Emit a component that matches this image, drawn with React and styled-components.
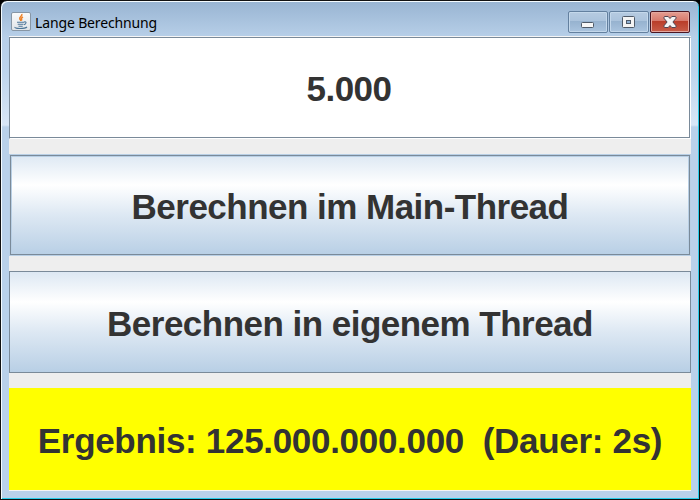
import React from "react";
import styled, { createGlobalStyle } from "styled-components";

const Global = createGlobalStyle`
  * { box-sizing: border-box; }
  body { margin: 0; background: #000; overflow: hidden; }
`;
const Window = styled.main`
  width: 700px; height: 500px; display: flex; flex-direction: column;
  padding: 0 8px 7px;
  border: 1px solid #111;
  border-radius: 7px 7px 0 0;
  background: linear-gradient(180deg, #98b4d2 0, #b7cfe8 36px, #bdd4ec 70px, #d8e6f6 124px, #b9d1ea 126px);
  box-shadow: inset 1px 1px #f4fbff, inset -1px -1px #28cdea;
`;
const TitleBar = styled.header`
  height: 35px; flex: none; display: flex; padding: 10px 0 0 2px;
`;
const Title = styled.h1`
  margin: 2px auto 0 4px; font: 14px/20px "Noto Sans", sans-serif; color: #000;
  letter-spacing: -0.14px;
`;
const Controls = styled.div`display: flex; gap: 1px; margin-right: 1px;`;
const Control = styled.button`
  width: 40px; height: 22px; padding: 0; display: grid; place-items: center;
  border: 1px solid ${p => p.$close ? "#4b1521" : "#63809f"}; border-radius: 2px;
  box-shadow: inset 0 0 0 1px ${p => p.$close ? "#e3a79f" : "#c4d8eb"};
  background: ${p => p.$close
    ? "linear-gradient(#e49d91 0, #d7786b 45%, #b93c29 46%, #c95d49 100%)"
    : "linear-gradient(#b6cbe1 0, #abc3dc 45%, #96b2cf 46%, #aac4df 100%)"};
  svg { display: block; }
`;
const Content = styled.section`
  height: 455px; background: #eee; display: flex; flex-direction: column; gap: 15px;
  border-top: 1px solid #f5f5f5;
  border-bottom: 1px solid #f5f5f5;
`;
const caption = `
  font: bold 35px/1 "Liberation Sans", Arial, sans-serif; color: #333; text-align: center;
  letter-spacing: -0.52px;
  height: 102px; flex: none; margin: 0;
`;
const Field = styled.input`
  ${caption}
  width: 100%; padding: 2px 2px 0 0; outline: 0;
  background: #fff; border: 1px solid #7a8a99; border-radius: 0;
  border-right-color: #fff; border-bottom-color: #fff;
  box-shadow: inset -1px -1px #7a8a99;
`;
const Action = styled.button`
  ${caption}
  padding: 3px 0 0; border: 1px solid ${p => p.$focused ? "#b8cfe5" : "#7a8a99"};
  border-radius: 0;
  box-shadow: ${p => p.$focused
    ? "inset 0 0 0 1px #7a8a99, inset 1px 1px 0 1px #b8cfe5, inset -1px 0 0 1px #b8cfe5"
    : "none"};
  background: linear-gradient(#dde8f3 0, #fff 30%, #dde8f3 60%, #b8cfe5 100%);
`;
const Result = styled.output`
  ${caption}
  display: grid; place-items: center; padding-top: 3px; background: #ff0; white-space: pre;
  letter-spacing: -0.31px;
`;

function JavaIcon() {
  return (
    <svg width="20" height="20" viewBox="0 0 20 20">
      <defs>
        <linearGradient id="tile" x2="0" y2="1">
          <stop stopColor="#fbfbfb" /><stop offset="1" stopColor="#dfe3e7" />
        </linearGradient>
      </defs>
      <rect x=".5" y="1.5" width="19" height="18" rx="1.5" fill="url(#tile)" stroke="#8796a5" />
      <path d="M10.8 3c1 2-3 3-2 5 .4 1 1 1 1 2M12 6c-2 1-2 2-1 3.5" fill="none" stroke="#ed8127" strokeWidth="1.5" />
      <path d="M6 11.2h7.3M6.7 13.2h5.8M7.5 15.2h4.2M13 11c3-1 2.4 2 0 2.6M4 16c-1 2 10 2 12 0" fill="none" stroke="#4d7698" strokeWidth="1.1" />
    </svg>
  );
}

export default function App() {
  return (
    <>
      <Global />
      <Window>
        <TitleBar>
          <JavaIcon />
          <Title>Lange Berechnung</Title>
          <Controls>
            <Control aria-label="Minimieren">
              <svg width="14" height="14"><rect x=".5" y="7.5" width="12" height="5" rx="1" fill="#f7f7f7" stroke="#4f5a68" /></svg>
            </Control>
            <Control aria-label="Maximieren">
              <svg width="14" height="14">
                <rect x=".5" y="1.5" width="12" height="11" rx="1" fill="#f4f4f4" stroke="#4f5a68" />
                <rect x="4.5" y="5.5" width="4" height="3" fill="#8fb0d2" stroke="#4f5a68" />
              </svg>
            </Control>
            <Control $close aria-label="Schließen">
              <svg width="14" height="14"><path d="M1.5 1.5h3.7L7 3.5l1.8-2h3.7l.8 1.5L9.9 7l3.4 4-.8 1.5H8.8L7 10.5l-1.8 2H1.5L.7 11l3.4-4L.7 3z" fill="#f4f4f4" stroke="#50434f" /></svg>
            </Control>
          </Controls>
        </TitleBar>
        <Content>
          <Field defaultValue="5.000" />
          <Action $focused>Berechnen im Main-Thread</Action>
          <Action>Berechnen in eigenem Thread</Action>
          <Result>{"Ergebnis: 125.000.000.000  (Dauer: 2s)"}</Result>
        </Content>
      </Window>
    </>
  );
}
